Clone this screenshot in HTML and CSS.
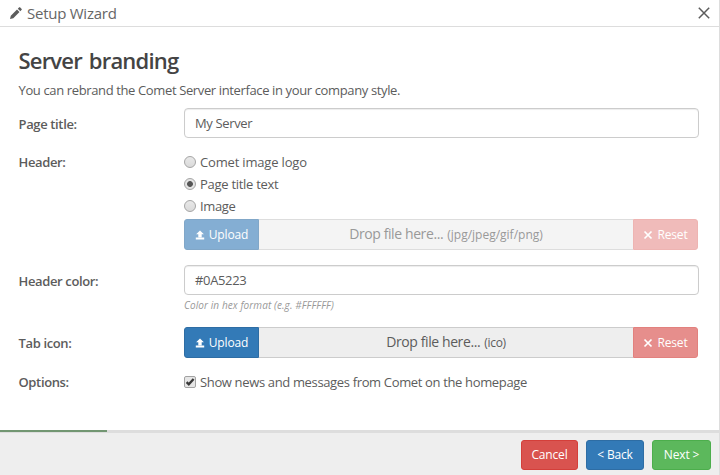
FILE: index.html
```html
<!DOCTYPE html>
<html lang="en">
<head>
<meta charset="utf-8">
<title>Setup Wizard</title>
<link rel="stylesheet" href="styles.css">
</head>
<body>
<svg class="defs" width="0" height="0" aria-hidden="true">
  <symbol id="upload" viewBox="0 0 10 10"><path d="M5 .4 8.9 4.3H6.7V7.2H3.3V4.3H1.1zM.8 7.5H9.2V9.4H.8z" fill="currentColor"/></symbol>
  <symbol id="cross" viewBox="0 0 10 10"><path d="M1.5 1.5 8.5 8.5M8.5 1.5 1.5 8.5" stroke="currentColor" stroke-width="1.7" fill="none"/></symbol>
</svg>
<div class="dialog">
  <header class="titlebar">
    <svg class="pencil" viewBox="0 0 12 12"><path d="M0 12 .8 8.7 7 2.5 9.5 5 3.3 11.2zM7.8 1.7 9.2.3Q9.6 0 10 .3L11.7 2Q12 2.4 11.7 2.8L10.3 4.2z" fill="currentColor"/></svg>
    <span class="caption">Setup Wizard</span>
    <svg class="close" viewBox="0 0 12 12"><path d="M.8.8 11.2 11.2M11.2.8.8 11.2" stroke="currentColor" stroke-width="1.5" fill="none"/></svg>
  </header>
  <main class="content">
    <h1>Server branding</h1>
    <p class="intro">You can rebrand the Comet Server interface in your company style.</p>
    <div class="row row-title">
      <div class="label">Page title:</div>
      <div class="input">My Server</div>
    </div>
    <div class="row row-header">
      <div class="label">Header:</div>
      <div class="choices">
        <div class="choice"><i class="radio"></i><span class="logo-text">Comet image logo</span></div>
        <div class="choice"><i class="radio on"></i><span class="title-text">Page title text</span></div>
        <div class="choice"><i class="radio"></i><span>Image</span></div>
        <div class="upload disabled">
          <div class="btn primary"><svg><use href="#upload"/></svg><span>Upload</span></div>
          <div class="drop"><span>Drop file here...</span><small>(jpg/jpeg/gif/png)</small></div>
          <div class="btn danger reset"><svg><use href="#cross"/></svg><span>Reset</span></div>
        </div>
      </div>
    </div>
    <div class="row row-color">
      <div class="label">Header color:</div>
      <div class="input">#0A5223</div>
    </div>
    <div class="help">Color in hex format (e.g. #FFFFFF)</div>
    <div class="row row-icon">
      <div class="label">Tab icon:</div>
      <div class="upload">
        <div class="btn primary"><svg><use href="#upload"/></svg><span>Upload</span></div>
        <div class="drop"><span>Drop file here...</span><small>(ico)</small></div>
        <div class="btn danger reset"><svg><use href="#cross"/></svg><span>Reset</span></div>
      </div>
    </div>
    <div class="row row-options">
      <div class="label">Options:</div>
      <div class="choice"><svg class="check" viewBox="0 0 12 12"><rect x=".5" y=".5" width="11" height="11" rx="1.5" fill="#e6e6e6" stroke="#a2a2a2"/><path d="M2.6 6.1 4.8 8.3 9.6 2.9" fill="none" stroke="#383838" stroke-width="2.3"/></svg><span class="news">Show news and messages from Comet on the homepage</span></div>
    </div>
  </main>
  <div class="progress"><div class="bar"></div></div>
  <footer class="footer">
    <div class="btn danger cancel">Cancel</div>
    <div class="btn primary back">&lt; Back</div>
    <div class="btn success next">Next &gt;</div>
  </footer>
</div>
</body>
</html>
```
FILE: styles.css
```css
* { box-sizing: border-box; }
body {
  margin: 0;
  background: #fff;
  color: #5c5c5c;
  font: 13px/22px "Open Sans", "Noto Sans", sans-serif;
  letter-spacing: -0.35px;
  white-space: nowrap;
}
.defs { display: block; }
.dialog {
  width: 720px;
  height: 475px;
  display: flex;
  flex-direction: column;
  border-right: 1px solid #ddd;
  overflow: hidden;
}
.titlebar {
  height: 27px;
  display: flex;
  align-items: center;
  padding: 0 9px 0 10px;
  border-bottom: 1px solid #ddd;
  flex: none;
}
.pencil { width: 12px; height: 12px; margin-right: 5px; }
.caption { font-size: 15px; line-height: 20px; margin-top: -1px; letter-spacing: -0.25px; color: #666; }
.close { width: 12px; height: 12px; margin-left: auto; }
.content { flex: 1; padding: 17px 20px 0 18.5px; }
h1 {
  margin: 0;
  padding-top: 1px;
  font-size: 22px;
  line-height: 31px;
  font-weight: 600;
  letter-spacing: -0.8px;
  word-spacing: 2px;
  color: #444;
}
.intro { margin: 3px 0 7px; line-height: 22px; letter-spacing: -0.37px; }
.row { display: grid; grid-template-columns: 165.5px 515px; }
.label { font-weight: 600; letter-spacing: -0.36px; }
.row-title .label, .row-color .label, .row-icon .label { padding-top: 5px; }
.input {
  height: 30px;
  padding: 0 10px;
  line-height: 28px;
  border: 1px solid #ccc;
  border-radius: 4px;
  box-shadow: inset 0 1px 1px rgba(0, 0, 0, .075);
}
.row-header { margin-top: 13px; }
.choice { display: flex; align-items: center; height: 22px; }
.logo-text { letter-spacing: -0.17px; }
.title-text { letter-spacing: -0.28px; }
.radio {
  width: 12px;
  height: 12px;
  margin-right: 4px;
  border: 1px solid #a5a5a5;
  border-radius: 50%;
  background: linear-gradient(#e8e8e8, #dadada);
}
.radio.on { background: radial-gradient(circle, #555 0 2.5px, #e4e4e4 3.3px); }
.check { width: 12px; height: 12px; margin-right: 4px; }
.upload { display: flex; width: 514px; height: 31px; margin-top: 2px; }
.row-icon .upload { margin-top: 0; }
.btn {
  display: flex;
  align-items: center;
  justify-content: center;
  border: 1px solid;
  border-radius: 3px;
  color: #fff;
  font-size: 12px;
  font-weight: 500;
  letter-spacing: -0.15px;
}
.primary { background: #337ab7; border-color: #2e6da4; }
.danger { background: #d9534f; border-color: #d43f3a; }
.success { background: #5cb85c; border-color: #4cae4c; }
.btn svg { width: 10px; height: 10px; margin-right: 4px; }
.upload .primary { width: 75px; border-radius: 3px 0 0 3px; }
.upload .reset { width: 65px; border-radius: 0 3px 3px 0; opacity: .65; }
.drop {
  flex: 1;
  display: flex;
  align-items: baseline;
  justify-content: center;
  gap: 4px;
  padding-top: 3px;
  background: #eee;
  border: solid #ccc;
  border-width: 1px 0;
  font-size: 14px;
  letter-spacing: -0.4px;
}
.drop small { font-size: 12px; letter-spacing: -0.3px; }
.disabled .drop small { letter-spacing: 0; }
.disabled .primary { opacity: .6; }
.disabled .drop { background: #f4f4f4; border-color: #ddd; color: #999; }
.disabled .reset { opacity: .39; }
.row-color { margin-top: 15px; }
.help {
  margin-left: 165.5px;
  height: 22px;
  line-height: 20px;
  font-size: 10px;
  font-style: italic;
  letter-spacing: 0.09px;
  color: #999;
}
.row-icon { margin-top: 10px; }
.row-options { margin-top: 13px; }
.progress { height: 3px; background: #ddd; flex: none; }
.bar { width: 107px; height: 2px; background: #729672; }
.footer {
  height: 42px;
  flex: none;
  display: flex;
  gap: 8px;
  justify-content: flex-end;
  padding: 7px 8px 5px;
  background: #eee;
}
.cancel { width: 57px; }
.back { width: 58px; }
.next { width: 59px; }
```
